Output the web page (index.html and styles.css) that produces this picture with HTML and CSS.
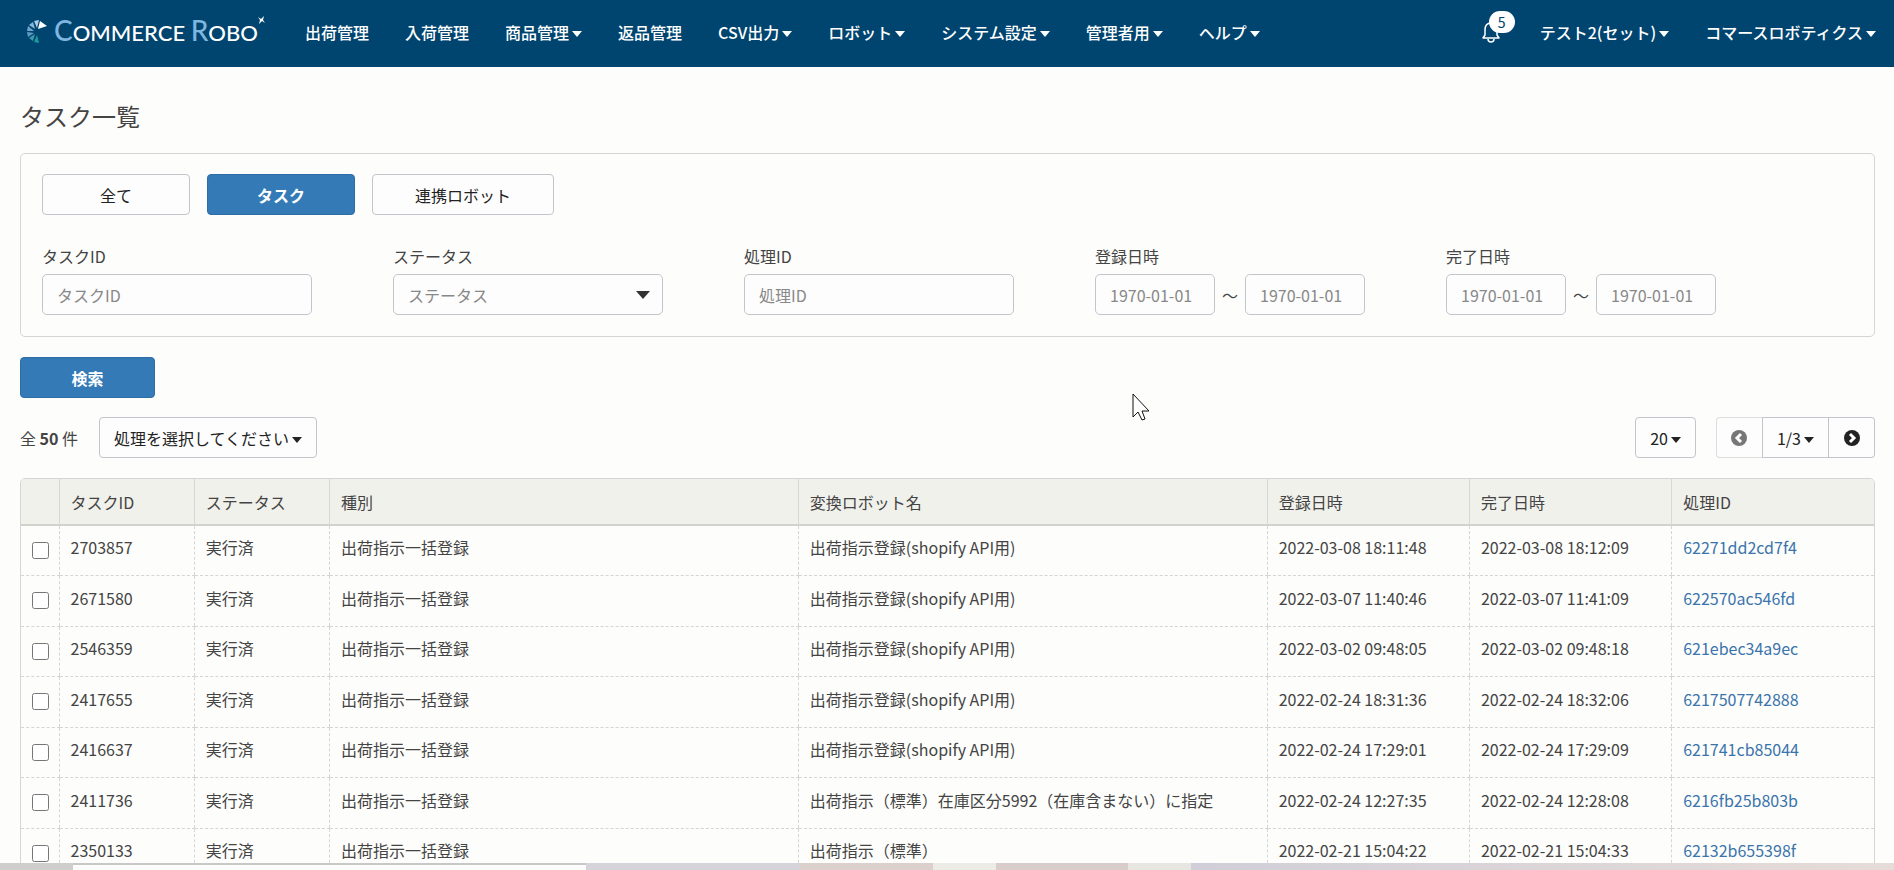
FILE: index.html
```html
<!DOCTYPE html>
<html lang="ja">
	<head>
		<meta charset="utf-8">
		<title>タスク一覧</title>
		<link rel="stylesheet" href="styles.css">
	</head>
	<body>

	<header class="navbar">
		<a class="brand" href="#">
			<svg class="brand-mark" width="22" height="24" viewBox="0 0 20 24">
				<path fill="#fff" d="M11 9 L13 1 L20 6 Z"/>
				<path fill="#a9cdea" d="M10 8 L7 1 L12 0 Z"/>
				<path fill="#8ab9df" d="M8 9 L2 5 L6 2 Z"/>
				<path fill="#6fa3cc" d="M7 11 L0 11 L1 6 Z"/>
				<path fill="#5d9cc0" d="M7 13 L1 17 L0 12 Z"/>
				<path fill="#3c9bb0" d="M8 14 L6 21 L2 18 Z"/>
				<path fill="#1c9a9a" d="M10 15 L12 23 L7 22 Z"/>
			</svg>
			<span class="brand-name"><b>C</b>OMMERCE <b>R</b>OBO</span>
			<svg class="brand-star" width="7" height="8" viewBox="0 0 7 8">
				<path fill="#fff" d="M0 1 L3 3 L6 0 L5 4 L7 7 L4 5 L1 8 L2 4 Z"/>
			</svg>
		</a>
		<nav class="menu">
			<a href="#">出荷管理</a>
			<a href="#">入荷管理</a>
			<a href="#">商品管理<i class="caret"></i></a>
			<a href="#">返品管理</a>
			<a href="#">CSV出力<i class="caret"></i></a>
			<a href="#">ロボット<i class="caret"></i></a>
			<a href="#">システム設定<i class="caret"></i></a>
			<a href="#">管理者用<i class="caret"></i></a>
			<a href="#">ヘルプ<i class="caret"></i></a>
		</nav>
		<nav class="menu menu-right">
			<a class="bell" href="#" aria-label="お知らせ">
				<svg width="20" height="22" viewBox="0 0 20 22" fill="none" stroke="#fff" stroke-width="1.5">
					<path d="M10 2 C6 2 4 5 4 9 V14 L2 17 H18 L16 14 V9 C16 5 14 2 10 2 Z" stroke-linejoin="round"/>
					<path d="M7 18 C7 22 13 22 13 18"/>
				</svg>
				<span class="badge">5</span>
			</a>
			<a href="#">テスト2(セット)<i class="caret"></i></a>
			<a href="#">コマースロボティクス<i class="caret"></i></a>
		</nav>
	</header>

	<main class="content">
		<h1>タスク一覧</h1>

		<form class="search">
			<div class="panel">
				<div class="tabs">
					<button type="button" class="btn">全て</button>
					<button type="button" class="btn primary">タスク</button>
					<button type="button" class="btn">連携ロボット</button>
				</div>
				<div class="fields">
					<div class="field">
						<label for="task-id">タスクID</label>
						<input type="text" id="task-id" placeholder="タスクID">
					</div>
					<div class="field">
						<label for="status">ステータス</label>
						<div class="select">
							<select id="status"><option>ステータス</option></select>
							<svg width="14" height="8" viewBox="0 0 14 8"><path d="M0 0 H14 L7 8 Z" fill="#333"/></svg>
						</div>
					</div>
					<div class="field">
						<label for="process-id">処理ID</label>
						<input type="text" id="process-id" placeholder="処理ID">
					</div>
					<div class="field">
						<label for="created-from">登録日時</label>
						<div class="range">
							<input type="text" id="created-from" placeholder="1970-01-01">
							<span>～</span>
							<input type="text" aria-label="登録日時" placeholder="1970-01-01">
						</div>
					</div>
					<div class="field">
						<label for="done-from">完了日時</label>
						<div class="range">
							<input type="text" id="done-from" placeholder="1970-01-01">
							<span>～</span>
							<input type="text" aria-label="完了日時" placeholder="1970-01-01">
						</div>
					</div>
				</div>
			</div>
			<button type="button" class="btn primary submit">検索</button>
		</form>

		<div class="toolbar">
			<p>全 <b>50</b> 件</p>
			<button type="button" class="btn drop">処理を選択してください<i class="caret"></i></button>
			<button type="button" class="btn drop per-page">20<i class="caret"></i></button>
			<div class="pager">
				<button type="button" class="btn" aria-label="前へ" disabled>
					<svg width="16" height="16" viewBox="0 0 16 16"><circle cx="8" cy="8" r="8"/><path d="M10 4 L6 8 L10 12" fill="none" stroke="#fff" stroke-width="3"/></svg>
				</button>
				<button type="button" class="btn drop">1/3<i class="caret"></i></button>
				<button type="button" class="btn" aria-label="次へ">
					<svg width="16" height="16" viewBox="0 0 16 16"><circle cx="8" cy="8" r="8"/><path d="M6 4 L10 8 L6 12" fill="none" stroke="#fff" stroke-width="3"/></svg>
				</button>
			</div>
		</div>

		<div class="table-wrap">
			<table>
				<colgroup>
					<col class="c-check"><col class="c-short"><col class="c-short"><col class="c-long"><col class="c-long"><col><col><col>
				</colgroup>
				<thead>
					<tr><th></th><th>タスクID</th><th>ステータス</th><th>種別</th><th>変換ロボット名</th><th>登録日時</th><th>完了日時</th><th>処理ID</th></tr>
				</thead>
				<tbody>
					<tr><td><input type="checkbox" aria-label="2703857"></td><td>2703857</td><td>実行済</td><td>出荷指示一括登録</td><td>出荷指示登録(shopify API用)</td><td>2022-03-08 18:11:48</td><td>2022-03-08 18:12:09</td><td><a href="#">62271dd2cd7f4</a></td></tr>
					<tr><td><input type="checkbox" aria-label="2671580"></td><td>2671580</td><td>実行済</td><td>出荷指示一括登録</td><td>出荷指示登録(shopify API用)</td><td>2022-03-07 11:40:46</td><td>2022-03-07 11:41:09</td><td><a href="#">622570ac546fd</a></td></tr>
					<tr><td><input type="checkbox" aria-label="2546359"></td><td>2546359</td><td>実行済</td><td>出荷指示一括登録</td><td>出荷指示登録(shopify API用)</td><td>2022-03-02 09:48:05</td><td>2022-03-02 09:48:18</td><td><a href="#">621ebec34a9ec</a></td></tr>
					<tr><td><input type="checkbox" aria-label="2417655"></td><td>2417655</td><td>実行済</td><td>出荷指示一括登録</td><td>出荷指示登録(shopify API用)</td><td>2022-02-24 18:31:36</td><td>2022-02-24 18:32:06</td><td><a href="#">6217507742888</a></td></tr>
					<tr><td><input type="checkbox" aria-label="2416637"></td><td>2416637</td><td>実行済</td><td>出荷指示一括登録</td><td>出荷指示登録(shopify API用)</td><td>2022-02-24 17:29:01</td><td>2022-02-24 17:29:09</td><td><a href="#">621741cb85044</a></td></tr>
					<tr><td><input type="checkbox" aria-label="2411736"></td><td>2411736</td><td>実行済</td><td>出荷指示一括登録</td><td>出荷指示（標準）在庫区分5992（在庫含まない）に指定</td><td>2022-02-24 12:27:35</td><td>2022-02-24 12:28:08</td><td><a href="#">6216fb25b803b</a></td></tr>
					<tr><td><input type="checkbox" aria-label="2350133"></td><td>2350133</td><td>実行済</td><td>出荷指示一括登録</td><td>出荷指示（標準）</td><td>2022-02-21 15:04:22</td><td>2022-02-21 15:04:33</td><td><a href="#">62132b655398f</a></td></tr>
				</tbody>
			</table>
		</div>
	</main>

	<div class="strip"><i></i><i></i><i></i><i></i><i></i><i></i><i></i><i></i></div>

	<svg class="pointer" width="18" height="28" viewBox="0 0 18 28">
		<path d="M1 1 V24 L6 19 L10 27 L13 26 L10 18 H17 Z" fill="#fff" stroke="#111" stroke-width="1"/>
	</svg>

	</body>
</html>
```
FILE: styles.css
```css
* { box-sizing: border-box; }
body {
	background-color: #fdfdfb;
	color: #444;
	display: flex;
	flex-direction: column;
	font: normal 16px/22px "Noto Sans CJK JP", sans-serif;
	height: 100vh;
	margin: 0;
	overflow: hidden;
}
a { color: #3a74ab; text-decoration: none; }
button, input, select { font: inherit; }

/* header */
.navbar {
	align-items: center;
	background-color: #00456f;
	display: flex;
	flex: none;
	height: 67px;
	padding: 0 0 4px 26px;
}
.brand {
	align-items: center;
	color: #fff;
	display: flex;
	width: 261px;
}
.brand-name {
	font: 500 22px/28px Lato, sans-serif;
	margin-left: 6px;
	white-space: nowrap;
}
.brand-name b { color: #7fb6e0; font-size: 28px; font-weight: 500; }
.brand-star { align-self: flex-start; }
.menu { display: flex; }
.menu a {
	color: #fff;
	font-weight: 500;
	padding: 0 18px;
	white-space: nowrap;
}
.menu-right { margin-left: auto; }
.caret {
	border: 5px solid transparent;
	border-bottom: 0;
	border-top: 6px solid;
	display: inline-block;
	margin-left: 3px;
	vertical-align: 2px;
}
.menu .bell { padding: 0; position: relative; width: 39px; }
.menu .bell { margin-right: 2px; }
.bell svg { display: block; }
.badge {
	background-color: #fff;
	border-radius: 11px;
	color: #00456f;
	font-size: 14px;
	font-weight: normal;
	left: 8px;
	padding: 0 9px;
	position: absolute;
	top: -10px;
}

.content { flex: 1; min-height: 0; overflow: hidden; padding: 35px 19px 0 20px; }
h1 { font-size: 24px; font-weight: normal; line-height: 28px; margin: 0 0 23px; }
.panel { border: 1px solid #d5d5d8; border-radius: 5px; padding: 20px 21px 21px; }

.btn {
	background-color: #fdfdfd;
	border: 1px solid #c4c4cc;
	border-radius: 4px;
	color: #222;
	height: 41px;
	padding: 0 12px;
}
.primary { background-color: #337ab7; border-color: #2e6da4; color: #fff; font-weight: bold; }
.drop { white-space: nowrap; }

.tabs { display: flex; gap: 17px; margin-bottom: 30px; }
.tabs .btn { min-width: 148px; padding: 0 42px; }
.fields {
	column-gap: 81px;
	display: grid;
	grid-template-columns: repeat(5, 1fr);
	padding-right: 137px;
}
.field label { display: block; margin-bottom: 7px; }
.field input, .field select {
	background-color: #fdfdfd;
	border: 1px solid #c4c4cc;
	border-radius: 5px;
	color: #888;
	height: 41px;
	min-width: 0;
	padding: 0 14px;
	width: 100%;
}
.field ::placeholder { color: #888; opacity: 1; }
.select { align-items: center; display: grid; }
.select select, .select svg { grid-area: 1 / 1; }
.field select { appearance: none; }
.select svg { justify-self: end; margin-right: 13px; pointer-events: none; }
.range { align-items: center; display: flex; }
.range input { flex: 1; }
.range span { flex: none; text-align: center; width: 30px; }
.submit { display: block; margin: 20px 0 19px; width: 135px; }

.toolbar { align-items: center; display: flex; margin-bottom: 20px; }
.toolbar p { margin: 0 21px 0 0; }
.toolbar .drop { padding: 0 14px; }
.toolbar .per-page { margin-left: auto; }
.pager { display: flex; margin-left: 20px; }
.pager .btn { border-radius: 0; }
.pager .btn:first-child { border-radius: 4px 0 0 4px; border-right: 0; }
.pager .btn:last-child { border-left: 0; border-radius: 0 4px 4px 0; }
.pager .btn:not(.drop) { width: 46px; }
.pager svg { display: block; fill: #222; margin: 0 auto; }
.pager .btn:disabled { border-color: #ddd; }
.pager .btn:disabled svg { fill: #777; }

/* task list */
.table-wrap { border: 1px solid #d5d5d5; border-radius: 5px; overflow: hidden; }
table { border-collapse: collapse; table-layout: fixed; width: 100%; }
.c-check { width: 38px; }
th, td { padding: 0 11px; text-align: left; white-space: nowrap; }
th {
	background-color: #f1f1ec;
	border-bottom: 2px solid #d2d2cc;
	font-weight: normal;
	height: 46px;
}
td { border-bottom: 1px dashed #d5d5d8; height: 50px; padding-bottom: 6px; }
tr:nth-child(even) td { height: 51px; }
th + th { border-left: 1px solid #d8d8d4; }
td + td { border-left: 1px dashed #d5d5d8; }
.c-short { width: 7.3%; }
.c-long { width: 25.3%; }
td input { display: block; height: 17px; margin: 0; width: 17px; }
td:first-child { padding: 0 11px; }

/* bottom strip */
.strip { background-color: #d2d0d4; display: flex; flex: none; height: 7px; }
.strip i { background-color: #d0cecc; flex: 73; }
.strip i:nth-child(2) { background-color: #fdfdfb; border-top: 2px solid #c8c8c8; flex: 513; }
.strip i:nth-child(3) { background-color: #d6d4da; flex: 214; }
.strip i:nth-child(4) { background-color: #dcd0cc; flex: 133; }
.strip i:nth-child(5) { background-color: #ecebe6; flex: 63; }
.strip i:nth-child(6) { background-color: #d9cdcc; flex: 132; }
.strip i:nth-child(7) { background-color: #e8e6e0; flex: 63; }
.strip i:nth-child(8) { background: linear-gradient(to right, #d0ced8, #e6dcd8); flex: 703; }

.pointer { left: 1132px; position: absolute; top: 393px; }
```
